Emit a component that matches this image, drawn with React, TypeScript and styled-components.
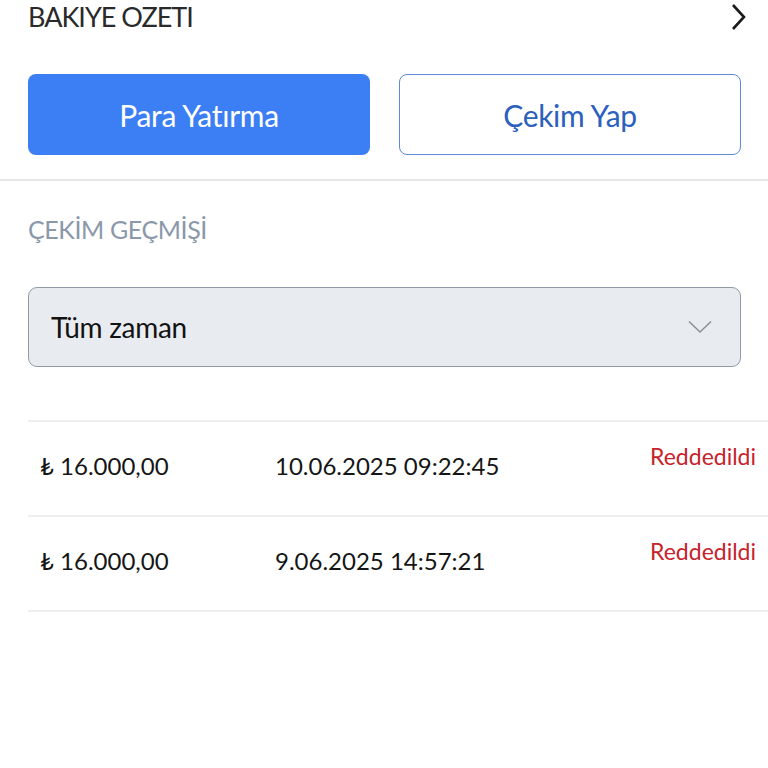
import styled, { createGlobalStyle } from 'styled-components';

const GlobalStyle = createGlobalStyle`
  body {
    margin: 0;
    background: #ffffff;
    font-family: Lato, "Open Sans", sans-serif;
    color: #151515;
  }
`;

const Page = styled.div`
  width: 768px;
  overflow: hidden;
`;

const Header = styled.div`
  display: flex;
  align-items: center;
  justify-content: space-between;
  padding: 0 20px 0 28px;
  height: 34px;
`;

const HeaderTitle = styled.div`
  font-size: 27px;
  line-height: 34px;
  letter-spacing: -1px;
  color: #2a2a2a;
`;

const ActionRow = styled.div`
  display: grid;
  grid-template-columns: 1fr 1fr;
  gap: 29px;
  padding: 0 27px 0 28px;
  margin-top: 40px;
`;

const ActionButton = styled.button<{ $primary?: boolean }>`
  height: 81px;
  border-radius: 8px;
  font-family: inherit;
  font-size: 30px;
  letter-spacing: -0.3px;
  cursor: pointer;
  background: ${p => (p.$primary ? '#3c7ef4' : '#ffffff')};
  color: ${p => (p.$primary ? '#ffffff' : '#2b60bd')};
  border: ${p => (p.$primary ? 'none' : '1.5px solid #5e8ad8')};
`;

const Divider = styled.div`
  height: 2px;
  background: #e7e7e7;
  margin-top: 24px;
`;

const SectionTitle = styled.div`
  padding-left: 28px;
  margin-top: 33px;
  font-size: 25px;
  line-height: 30px;
  letter-spacing: -0.4px;
  color: #8a98aa;
`;

const Select = styled.div`
  margin: 43px 27px 0 28px;
  height: 80px;
  box-sizing: border-box;
  border: 1.5px solid #8f9ba7;
  border-radius: 9px;
  background: #e8ecf1;
  display: flex;
  align-items: center;
  justify-content: space-between;
  padding: 0 28px 0 22px;
`;

const SelectValue = styled.span`
  font-size: 28px;
  letter-spacing: -0.3px;
  color: #121212;
`;

const List = styled.div`
  margin: 53px 0 0 28px;
  border-top: 2px solid #efefef;
`;

const Row = styled.div`
  display: grid;
  grid-template-columns: 235px 1fr auto;
  align-items: center;
  height: 93px;
  padding: 0 12px;
  border-bottom: 2px solid #efefef;
`;

const Cell = styled.span`
  font-size: 24px;
  color: #151515;
  margin-bottom: 6px;
`;

const Status = styled.span`
  font-size: 23px;
  color: #c8232b;
  margin-bottom: 26px;
`;

const rows = [
  { amount: '₺ 16.000,00', date: '10.06.2025 09:22:45', status: 'Reddedildi' },
  { amount: '₺ 16.000,00', date: '9.06.2025 14:57:21', status: 'Reddedildi' },
];

export default function App() {
  return (
    <Page>
      <GlobalStyle />
      <Header>
        <HeaderTitle>BAKIYE OZETI</HeaderTitle>
        <svg width="18" height="28" viewBox="0 0 18 28" fill="none">
          <path d="M3 2 L14 14 L3 26" stroke="#1a1a1a" strokeWidth="2.6" strokeLinejoin="miter" />
        </svg>
      </Header>

      <ActionRow>
        <ActionButton $primary>Para Yatırma</ActionButton>
        <ActionButton>Çekim Yap</ActionButton>
      </ActionRow>

      <Divider />

      <SectionTitle>ÇEKİM GEÇMİŞİ</SectionTitle>

      <Select>
        <SelectValue>Tüm zaman</SelectValue>
        <svg width="24" height="14" viewBox="0 0 24 14" fill="none">
          <path d="M1 1.5 L12 12 L23 1.5" stroke="#8b9096" strokeWidth="1.6" />
        </svg>
      </Select>

      <List>
        {rows.map((r, i) => (
          <Row key={i}>
            <Cell>{r.amount}</Cell>
            <Cell>{r.date}</Cell>
            <Status>{r.status}</Status>
          </Row>
        ))}
      </List>
    </Page>
  );
}
